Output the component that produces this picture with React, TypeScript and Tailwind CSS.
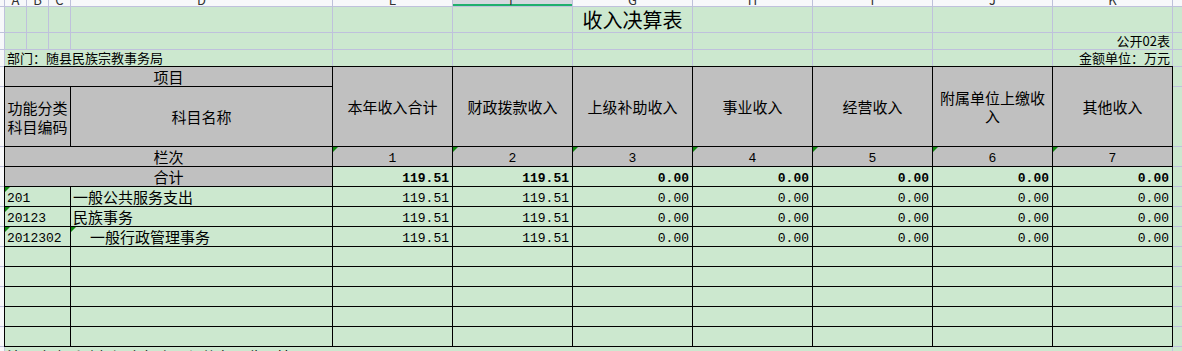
import React from "react";

const COLS = ["A", "B", "C", "D", "E", "F", "G", "H", "I", "J", "K"];

function Tri() {
  return (
    <span className="absolute left-0 top-0 h-0 w-0 border-t-[5px] border-r-[5px] border-t-[#118a11] border-r-transparent" />
  );
}

const HEAD = ["本年收入合计", "财政拨款收入", "上级补助收入", "事业收入", "经营收入", "附属单位上缴收入", "其他收入"];

const DATA = [
  { code: "201", name: "一般公共服务支出", indent: false, nameTri: false },
  { code: "20123", name: "民族事务", indent: false, nameTri: false },
  { code: "2012302", name: "一般行政管理事务", indent: true, nameTri: true },
];

const VALS = ["119.51", "119.51", "0.00", "0.00", "0.00", "0.00", "0.00"];

const cjk = "[font-family:'Noto_Sans_CJK_SC',sans-serif]";
const mono = "[font-family:'Liberation_Mono','Noto_Sans_CJK_SC',monospace]";

export default function App() {
  const stripRows = [19, 59, 19, 19, 19, 19, 19, 19, 19, 19, 19, 19];
  return (
    <div className="w-[1182px] h-[351px] overflow-hidden bg-[#cce8cf] text-black">
      {/* top area incl. column headers */}
      <div className="-mt-[14px] grid gap-px bg-[#bfc1dc] grid-cols-[4px_21px_21px_21px_261px_repeat(7,119px)_9px] grid-rows-[20px_25px_16px_16px]">
        <div className="bg-[#f7f8fa]" />
        {COLS.map((c) =>
          c === "F" ? (
            <div
              key={c}
              className={`bg-[#d5d8df] border-b-2 border-[#1faf6e] text-center text-[13px] leading-[16px] pt-[6px] text-[#333] ${cjk}`}
            >
              {c}
            </div>
          ) : (
            <div
              key={c}
              className={`bg-[#f7f8fa] text-center text-[13px] leading-[16px] pt-[6px] text-[#333] ${cjk}`}
            >
              {c}
            </div>
          )
        )}
        <div className="bg-[#f7f8fa]" />

        {/* row 1 */}
        <div className="bg-[#f7f8fa]" />
        {COLS.map((c) => (
          <div key={c} className="bg-[#cce8cf]">
            {c === "G" ? (
              <div className={`text-center text-[20px] leading-[25px] whitespace-nowrap ${cjk}`}>收入决算表</div>
            ) : null}
          </div>
        ))}
        <div className="bg-[#cce8cf]" />

        {/* row 2 */}
        <div className="bg-[#f7f8fa]" />
        {COLS.map((c) => (
          <div key={c} className="bg-[#cce8cf]">
            {c === "K" ? (
              <div className={`text-right text-[13px] leading-[16px] pr-[2px] whitespace-nowrap ${cjk}`}>公开02表</div>
            ) : null}
          </div>
        ))}
        <div className="bg-[#cce8cf]" />

        {/* row 3 */}
        <div className="bg-[#f7f8fa]" />
        <div className={`col-span-4 bg-[#cce8cf] text-[13px] leading-[16px] pl-[2px] whitespace-nowrap ${cjk}`}>
          部门：随县民族宗教事务局
        </div>
        {["E", "F", "G", "H", "I", "J"].map((c) => (
          <div key={c} className="bg-[#cce8cf]" />
        ))}
        <div className={`bg-[#cce8cf] text-right text-[13px] leading-[16px] pr-[2px] whitespace-nowrap ${cjk}`}>
          金额单位：万元
        </div>
        <div className="bg-[#cce8cf]" />
      </div>

      {/* table area */}
      <div className="flex">
        <div className="w-[4px] flex flex-col gap-px bg-[#bfc1dc] py-px">
          {stripRows.map((h, i) => (
            <div key={i} className="bg-[#f7f8fa]" style={{ height: h }} />
          ))}
        </div>
        <div className="w-[1169px] grid p-px gap-px bg-black grid-cols-[65px_261px_repeat(7,119px)] grid-rows-[19px_59px_repeat(10,19px)]">
          {/* header */}
          <div className={`col-span-2 bg-[#c0c0c0] flex items-center justify-center text-[15px] leading-[19px] ${cjk}`}>
            项目
          </div>
          {HEAD.map((h) => (
            <div
              key={h}
              className={`row-span-2 bg-[#c0c0c0] flex items-center justify-center text-center text-[15px] leading-[18px] px-[2px] ${cjk}`}
            >
              {h}
            </div>
          ))}
          <div className={`bg-[#c0c0c0] flex items-center justify-center text-center text-[15px] leading-[19px] ${cjk}`}>
            功能分类科目编码
          </div>
          <div className={`bg-[#c0c0c0] flex items-center justify-center text-[15px] leading-[19px] ${cjk}`}>
            科目名称
          </div>

          {/* 栏次 */}
          <div className={`col-span-2 bg-[#c0c0c0] text-center text-[15px] leading-[19px] ${cjk}`}>栏次</div>
          {[1, 2, 3, 4, 5, 6, 7].map((n) => (
            <div key={n} className={`relative bg-[#c0c0c0] text-center text-[13px] leading-[15px] pt-[4px] ${mono}`}>
              <Tri />
              {n}
            </div>
          ))}

          {/* 合计 */}
          <div className={`col-span-2 bg-[#c0c0c0] text-center text-[15px] leading-[19px] ${cjk}`}>合计</div>
          {VALS.map((v, i) => (
            <div key={i} className={`bg-[#cce8cf] text-right font-bold text-[13px] leading-[15px] pt-[4px] pr-[3px] ${mono}`}>
              {v}
            </div>
          ))}

          {/* data */}
          {DATA.map((r) => (
            <React.Fragment key={r.code}>
              <div className={`relative bg-[#cce8cf] text-[13px] leading-[15px] pt-[4px] pl-[2px] ${mono}`}>
                <Tri />
                {r.code}
              </div>
              <div
                className={`relative bg-[#cce8cf] text-[15px] leading-[19px] whitespace-nowrap ${cjk} ${
                  r.indent ? "pl-[19px]" : "pl-[2px]"
                }`}
              >
                {r.nameTri ? <Tri /> : null}
                {r.name}
              </div>
              {VALS.map((v, i) => (
                <div key={i} className={`bg-[#cce8cf] text-right text-[13px] leading-[15px] pt-[4px] pr-[3px] ${mono}`}>
                  {v}
                </div>
              ))}
            </React.Fragment>
          ))}

          {/* empty rows */}
          {Array.from({ length: 45 }).map((_, i) => (
            <div key={i} className="bg-[#cce8cf]" />
          ))}
        </div>
        <div className="w-[9px] flex flex-col gap-px bg-[#bfc1dc] py-px">
          {stripRows.map((h, i) => (
            <div key={i} className="bg-[#cce8cf]" style={{ height: h }} />
          ))}
        </div>
      </div>

      {/* bottom partial row */}
      <div className="grid gap-px bg-[#bfc1dc] grid-cols-[4px_1167px_9px] grid-rows-[20px]">
        <div className="bg-[#f7f8fa]" />
        <div className={`bg-[#cce8cf] text-[15px] leading-[19px] pl-[2px] whitespace-nowrap ${cjk}`}>
          注：本表反映部门本年度取得的各项收入情况。
        </div>
        <div className="bg-[#cce8cf]" />
      </div>
    </div>
  );
}
